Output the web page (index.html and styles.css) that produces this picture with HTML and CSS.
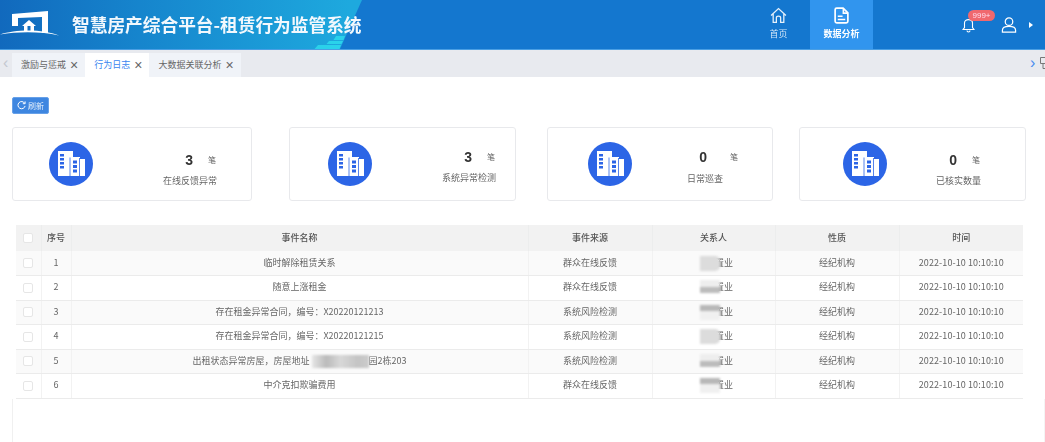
FILE: index.html
```html
<!DOCTYPE html>
<html lang="zh-CN">
<head>
<meta charset="utf-8">
<title>行为日志</title>
<link rel="stylesheet" href="styles.css">
</head>
<body>
<svg class="defs" width="0" height="0" aria-hidden="true">
  <symbol id="bld" viewBox="0 0 44 44">
    <circle cx="22" cy="22" r="22" fill="#2c65e6"/>
    <path fill="#fff" d="M9 9h15v25H9zM21 15h10v19H21zM31 17h5v17h-5z"/>
    <path fill="none" stroke="#2c65e6" stroke-width=".8" d="M21 15.500v18.500M30.500 16v18"/>
    <path fill="#2c65e6" d="M11 12h4v2.500h-4zM11 16h4v2.500h-4zM11 20h4v2.500h-4zM11 24h4v2.500h-4zM24 18.500h4v3h-4zM24 23h4v3h-4zM24 27.500h4v3h-4z"/>
  </symbol>
</svg>

<header class="top">
  <svg class="top-art" width="1045" height="49" viewBox="0 0 1045 49" aria-hidden="true">
    <path fill="#1477cf" d="M362 0H1045V49H340z"/>
    <path fill="#2fe0ef" opacity=".75" d="M336 36h9l-1.500 4h-10zM329 41h14l-1.500 3h-15zM318 45h23l-1.500 4h-25z"/>
  </svg>
  <div class="brand">
    <svg class="logo" width="62" height="49" viewBox="0 0 62 49" aria-hidden="true">
      <path fill="#fff" d="M12 14 48 11V33H42V17L18 18V26H12z"/>
      <path fill="#fff" fill-rule="evenodd" d="M22 26 29 20 36 26H34V31H24V26zM27.500 26V31H30.500V26z"/>
      <path fill="#fff" d="M0 34.500C15 29.500 42 28.500 59 35.500 42 31.500 18 31.500 0 34.500z"/>
    </svg>
    <h1 class="title">智慧房产综合平台-租赁行为监管系统</h1>
  </div>
  <nav class="nav">
    <a class="nav-item">
      <svg width="17" height="17" viewBox="0 0 16 16" fill="none" stroke="#e6f1fb" stroke-width="1.200" aria-hidden="true"><path d="M1 8 8 1.500 15 8M3 6.500V14.500H6V10C6 8 10 8 10 10V14.500H13V6.500"/></svg>
      <span>首页</span>
    </a>
    <a class="nav-item nav-active">
      <svg width="17" height="17" viewBox="0 0 16 16" aria-hidden="true"><path fill="none" stroke="#fff" stroke-width="1.600" d="M3.500 1h6L14 5.500V13.500Q14 15 12.500 15H3.500Q2 15 2 13.500V2.500Q2 1 3.500 1z"/><path fill="#fff" d="M9 1h1.500v4H14v1.500H9zM4.500 8H9v1.500H4.500zM4.500 11h7v1.500h-7z"/></svg>
      <span>数据分析</span>
    </a>
  </nav>
  <div class="tools">
    <div class="bell">
      <svg width="13" height="16" viewBox="0 0 13 16" fill="none" stroke="#fff" stroke-width="1.100" aria-hidden="true"><path d="M1 12.500H12L10.500 10.500V6C10.500 1.500 2.500 1.500 2.500 6V10.500zM5 13.500C5 15.500 8 15.500 8 13.500"/></svg>
      <span class="badge">999+</span>
    </div>
    <svg class="user" width="16" height="16" viewBox="0 0 16 17" fill="none" stroke="#fff" stroke-width="1.300" aria-hidden="true"><circle cx="8" cy="5" r="4"/><path d="M1 16V14C1 11 4 10 8 10S15 11 15 14V16z"/></svg>
    <span class="caret"></span>
  </div>
</header>

<div class="tabbar">
  <span class="tab-prev">‹</span>
  <div class="tab">激励与惩戒<i>×</i></div>
  <div class="tab tab-active">行为日志<i>×</i></div>
  <div class="tab">大数据关联分析<i>×</i></div>
  <span class="tab-next">›</span>
  <svg class="tab-tool" width="8" height="14" viewBox="0 0 8 14" fill="none" stroke="#777" aria-hidden="true"><path d="M.5 1.500h7v6h-7zM3 7.500v5h3"/></svg>
</div>

<main class="page">
  <button class="refresh" type="button">
    <svg width="9" height="9" viewBox="0 0 10 10" fill="none" stroke="#fff" stroke-width="1.100" aria-hidden="true"><path d="M8.500 2.500A4 4 0 1 0 9 5.500M9 .5v2.500H6.500"/></svg>
    <span>刷新</span>
  </button>

  <section class="cards">
    <article class="card card-a">
      <svg class="card-icon" width="44" height="44" aria-hidden="true"><use href="#bld"/></svg>
      <div class="stat">
        <div class="stat-line"><b>3</b><span>笔</span></div>
        <div class="stat-label">在线反馈异常</div>
      </div>
    </article>
    <article class="card card-b">
      <svg class="card-icon" width="44" height="44" aria-hidden="true"><use href="#bld"/></svg>
      <div class="stat">
        <div class="stat-line"><b>3</b><span>笔</span></div>
        <div class="stat-label">系统异常检测</div>
      </div>
    </article>
    <article class="card card-c">
      <svg class="card-icon" width="44" height="44" aria-hidden="true"><use href="#bld"/></svg>
      <div class="stat">
        <div class="stat-line"><b>0</b><span>笔</span></div>
        <div class="stat-label">日常巡查</div>
      </div>
    </article>
    <article class="card card-d">
      <svg class="card-icon" width="44" height="44" aria-hidden="true"><use href="#bld"/></svg>
      <div class="stat">
        <div class="stat-line"><b>0</b><span>笔</span></div>
        <div class="stat-label">已核实数量</div>
      </div>
    </article>
  </section>

  <table class="grid">
    <colgroup>
      <col class="c-check"><col class="c-no"><col class="c-name"><col class="c-src"><col class="c-who"><col class="c-kind"><col class="c-time">
    </colgroup>
    <thead>
      <tr><th><span class="box"></span></th><th>序号</th><th>事件名称</th><th>事件来源</th><th>关系人</th><th>性质</th><th>时间</th></tr>
    </thead>
    <tbody>
      <tr><td><span class="box"></span></td><td>1</td><td>临时解除租赁关系</td><td>群众在线反馈</td><td><span class="mask mask-a"></span>置业</td><td>经纪机构</td><td>2022-10-10 10:10:10</td></tr>
      <tr><td><span class="box"></span></td><td>2</td><td>随意上涨租金</td><td>群众在线反馈</td><td><span class="mask mask-b"></span>置业</td><td>经纪机构</td><td>2022-10-10 10:10:10</td></tr>
      <tr><td><span class="box"></span></td><td>3</td><td>存在租金异常合同，编号：X20220121213</td><td>系统风险检测</td><td><span class="mask mask-c"></span>置业</td><td>经纪机构</td><td>2022-10-10 10:10:10</td></tr>
      <tr><td><span class="box"></span></td><td>4</td><td>存在租金异常合同，编号：X20220121215</td><td>系统风险检测</td><td><span class="mask mask-a"></span>置业</td><td>经纪机构</td><td>2022-10-10 10:10:10</td></tr>
      <tr><td><span class="box"></span></td><td>5</td><td>出租状态异常房屋，房屋地址<span class="mask mask-addr"></span>园2栋203</td><td>系统风险检测</td><td><span class="mask mask-b"></span>置业</td><td>经纪机构</td><td>2022-10-10 10:10:10</td></tr>
      <tr><td><span class="box"></span></td><td>6</td><td>中介克扣欺骗费用</td><td>群众在线反馈</td><td><span class="mask mask-c"></span>置业</td><td>经纪机构</td><td>2022-10-10 10:10:10</td></tr>
    </tbody>
  </table>
  <div class="rest"></div>
</main>
</body>
</html>
```
FILE: styles.css
```css
* { box-sizing: border-box; }
html, body { margin: 0; height: 100%; overflow: hidden; }
body {
  background: #fff;
  color: #666;
  font: 9px/1.2 "Noto Sans CJK SC", "Noto Sans", sans-serif;
  display: flex;
  flex-direction: column;
  height: 442px;
  filter: blur(.3px);
}
.defs { position: absolute; }

/* header */
.top {
  position: relative;
  flex: none;
  height: 50px;
  display: flex;
  align-items: stretch;
  background: linear-gradient(90deg, #1169bd 0, #1685cd 140px, #1ea9de 350px);
  border-bottom: 1px solid #4a9fe4;
  color: #fff;
}
.top-art { position: absolute; left: 0; top: 0; }
.brand { position: relative; display: flex; align-items: center; flex: 1; }
.logo { flex: none; }
.title {
  margin: 0 0 0 10px;
  font-size: 17.700px;
  font-weight: 700;
  line-height: 1;
  color: #f2f8fd;
  white-space: nowrap;
}
.nav { position: relative; display: flex; }
.nav-item {
  width: 63px;
  display: flex;
  flex-direction: column;
  align-items: center;
  padding-top: 7px;
  gap: 5px;
  color: #cfe4f7;
}
.nav-active { background: #3195ee; color: #fff; font-weight: 700; }
.tools {
  position: relative;
  width: 172px;
  display: flex;
  align-items: flex-start;
  padding: 17px 0 0 89px;
}
.bell { position: relative; height: 16px; width: 13px; }
.badge {
  position: absolute;
  left: 6px;
  top: -7px;
  width: 27px;
  height: 11px;
  border-radius: 6px;
  background: #f0686e;
  font-size: 8px;
  line-height: 11px;
  text-align: center;
  color: #fde;
  font-family: "Liberation Sans", sans-serif;
}
.user { margin-left: 26px; }
.caret {
  margin: 5px 0 0 12px;
  border-left: 4px solid #fff;
  border-top: 3.500px solid transparent;
  border-bottom: 3.500px solid transparent;
}

/* tabs */
.tabbar {
  flex: none;
  height: 27px;
  padding: 3px 0 0 12px;
  display: flex;
  position: relative;
  background: #e8eaef;
}
.tab-prev, .tab-next {
  position: absolute;
  top: 4px;
  font: 16px/18px "Liberation Sans", sans-serif;
}
.tab-prev { left: 3px; color: #c4c8d0; }
.tab-next { left: 1030px; color: #4a8df0; }
.tab-tool { position: absolute; left: 1040px; top: 6px; }
.tab {
  height: 24px;
  padding: 0 7px 0 9px;
  display: flex;
  align-items: center;
  gap: 4px;
  background: #f0f3f8;
  color: #666;
}
.tab i { font: normal 14px/1 "Liberation Sans", sans-serif; color: #666; }
.tab-active { background: #fff; color: #3a86f0; }

/* content */
.page { flex: 1; display: flex; flex-direction: column; padding: 20px 0 0; min-height: 0; }
.refresh {
  align-self: flex-start;
  margin-left: 12px;
  width: 37px;
  height: 17px;
  padding: 0;
  border: 1px solid #66a0e8;
  border-radius: 2px;
  background: #3e86e0;
  color: #e4effb;
  font: 8px/1 "Noto Sans CJK SC", sans-serif;
  display: flex;
  align-items: center;
  justify-content: center;
  gap: 2px;
}

.cards { display: flex; margin-top: 13px; height: 74px; }
.card {
  position: relative;
  flex: none;
  display: flex;
  align-items: center;
  border: 1px solid #e8e9ec;
  border-radius: 3px;
  background: #fff;
}
.card-a { width: 240px; margin-left: 12px; }
.card-b { width: 227px; margin-left: 37px; }
.card-c { width: 226px; margin-left: 31px; }
.card-d { width: 227px; margin-left: 26px; }
.card-icon { flex: none; }
.card-a .card-icon { margin-left: 36px; }
.card-b .card-icon { margin-left: 38px; }
.card-c .card-icon { margin-left: 40px; }
.card-d .card-icon { margin-left: 43px; }
.stat { margin-left: auto; text-align: right; color: #666; }
.card-a .stat { margin-right: 34px; padding-top: 9px; }
.card-b .stat { margin-right: 19px; padding-top: 3px; }
.card-c .stat { margin-right: 49px; padding-top: 4px; }
.card-d .stat { margin-right: 44px; padding-top: 9px; }
.stat-line { display: flex; justify-content: flex-end; align-items: center; gap: 15px; height: 18px; }
.card-c .stat-line { gap: 23px; margin-right: -16px; }
.card-c .stat-label { margin-top: 7px; }
.stat-line b { font: 700 14px/18px "Liberation Sans", sans-serif; color: #333; }
.stat-line span { font-size: 8px; padding-right: 1px; }
.stat-label { margin-top: 6px; font-size: 9px; line-height: 12px; }

/* table */
.grid {
  margin: 24px 0 0 16px;
  width: 1007px;
  table-layout: fixed;
  border-collapse: collapse;
  flex: none;
}
.c-check { width: 25px; }
.c-no { width: 30px; }
.c-name { width: 457px; }
.c-src { width: 124px; }
.c-who { width: 123px; }
.c-kind { width: 124px; }
.c-time { width: 124px; }
.grid th {
  height: 26px;
  background: #f2f2f2;
  font-weight: 500;
  color: #555;
  text-align: center;
  padding: 0;
  border-left: 1px solid #eceded;
}
.grid td {
  height: 24.500px;
  text-align: center;
  padding: 0;
  border-left: 1px solid #f2f2f2;
  border-bottom: 1px solid #ebebeb;
  color: #666;
  white-space: nowrap;
}
.grid td:last-child { letter-spacing: .1px; }
.grid th:first-child, .grid td:first-child { border-left: 0; }
.grid tbody tr:nth-child(odd) td { background: #fafafa; }
.box {
  display: inline-block;
  width: 10px;
  height: 10px;
  border: 1px solid #e6e6e6;
  border-radius: 2px;
  background: #fff;
  vertical-align: middle;
}
.mask { display: inline-block; vertical-align: middle; filter: blur(1px); }
.mask-a, .mask-b, .mask-c { width: 20px; height: 15px; margin: 0 -5px 0 6px; }
.mask-a { background: #dcdcdc; border-radius: 0 5px 5px 0; }
.mask-b { background: linear-gradient(#eee 0 50%, #bcbcbc 50% 85%, #fff 85%); }
.mask-c { background: linear-gradient(#b8b8b8 0 40%, #f0f0f0 40%); }
.mask-addr {
  width: 57px;
  height: 13px;
  margin: 0 0 0 2px;
  background: linear-gradient(90deg, #e6e6e6, #bbb 25%, #d8d8d8 50%, #c4c4c4 80%, #ccc);
}
.rest { flex: 1; margin-left: 12px; border-left: 1px solid #f0f0f0; border-right: 1px solid #f4f4f4; }
```
